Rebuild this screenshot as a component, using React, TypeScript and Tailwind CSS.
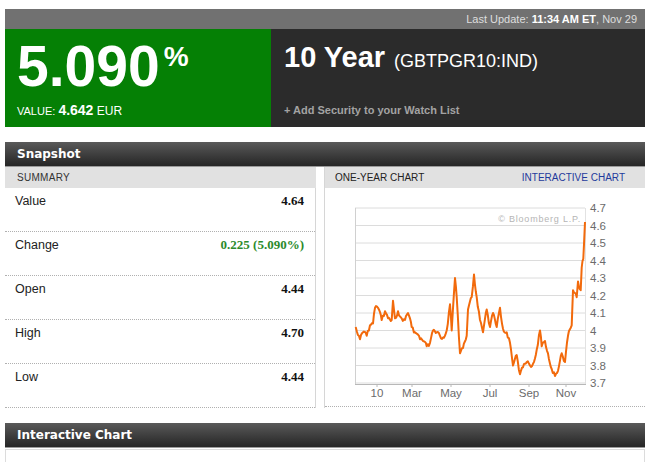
import React from "react";

const KEYS: [number, number][] = [
  [355.7, 4.02], [360, 3.95], [363, 3.99], [366.7, 3.97], [370, 4.03], [373, 4.04],
  [375, 4.13], [378, 4.13], [381.7, 4.06], [385, 4.11], [388, 4.07], [391.7, 4.06],
  [393, 4.17], [395, 4.07], [398, 4.11], [401.7, 4.07], [405, 4.06], [408, 4.1],
  [411.7, 4.02], [415, 3.99], [420, 3.95], [423, 3.94], [426.7, 3.91], [430, 3.93],
  [433, 4.0], [436.7, 3.99], [440, 3.97], [443, 3.96], [446.7, 4.0], [450, 4.15],
  [451.7, 4.0], [455, 4.3], [456.7, 4.19], [460, 3.87], [463, 3.9], [466.7, 3.97],
  [468, 4.12], [471.7, 4.19], [474, 4.32], [476.7, 4.19], [480, 4.06], [483, 3.99],
  [486.7, 4.12], [490, 4.02], [493, 4.1], [496.7, 4.02], [500, 4.13], [503, 4.01],
  [506.7, 3.99], [510, 3.93], [513, 3.8], [516.7, 3.86], [520, 3.75], [523, 3.79],
  [526.7, 3.82], [530, 3.8], [533, 3.81], [536.7, 3.89], [540, 4.0], [541.7, 3.91],
  [545, 3.94], [548, 3.87], [551.7, 3.78], [555, 3.74], [558, 3.77], [561.7, 3.87],
  [565, 3.82], [568, 3.97], [571.7, 4.03], [573, 4.23], [576.7, 4.19], [578, 4.28],
  [580.7, 4.23], [581.7, 4.36], [583.3, 4.41], [585, 4.62],
];

const yOf = (v: number) => 383 - (v - 3.7) * 175;

function buildPath() {
  const pts: string[] = [];
  for (let i = 0; i < KEYS.length - 1; i++) {
    const [x0, v0] = KEYS[i];
    const [x1, v1] = KEYS[i + 1];
    const steps = Math.max(1, Math.round(x1 - x0));
    for (let s = 0; s < steps; s++) {
      const t = s / steps;
      const x = x0 + (x1 - x0) * t;
      const noise = s === 0 ? 0 : Math.sin(x * 12.9898) * 0.012;
      const v = v0 + (v1 - v0) * t + noise;
      pts.push(`${x.toFixed(1)},${yOf(v).toFixed(1)}`);
    }
  }
  const last = KEYS[KEYS.length - 1];
  pts.push(`${last[0]},${yOf(last[1]).toFixed(1)}`);
  return pts.join(" ");
}

const LEVELS = [4.7, 4.6, 4.5, 4.4, 4.3, 4.2, 4.1, 4.0, 3.9, 3.8, 3.7];
const MONTHS: [string, number][] = [
  ["10", 377], ["Mar", 412], ["May", 451], ["Jul", 490], ["Sep", 529], ["Nov", 566],
];

function OneYearChart() {
  const line = buildPath();
  return (
    <svg width={320} height={218} viewBox="325 188 320 218" className="block">
      {LEVELS.map((v) => (
        <line key={v} x1={355} x2={585} y1={yOf(v)} y2={yOf(v)} stroke="#dcdcdc" strokeWidth={1} />
      ))}
      <line x1={355.5} x2={355.5} y1={yOf(4.7)} y2={384} stroke="#d0d0d0" />
      <line x1={585.5} x2={585.5} y1={yOf(4.7)} y2={384} stroke="#e2e2e2" />
      <line x1={355} x2={586} y1={384.5} y2={384.5} stroke="#b8b8b8" />
      {MONTHS.map(([m, x]) => (
        <g key={m}>
          <line x1={x} x2={x} y1={384} y2={387} stroke="#b8b8b8" />
          <text x={x} y={397} textAnchor="middle" fontSize={11.5} fill="#6b6b6b" fontFamily="'Liberation Sans', Arial, sans-serif">
            {m}
          </text>
        </g>
      ))}
      {LEVELS.map((v) => (
        <text key={v} x={590} y={yOf(v) + 4} fontSize={11.5} fill="#6b6b6b" fontFamily="'Liberation Sans', Arial, sans-serif">
          {v === 4 ? "4" : v.toFixed(1)}
        </text>
      ))}
      <text x={581} y={222} textAnchor="end" fontSize={9} letterSpacing={0.8} fill="#b5b5b5" fontFamily="'Liberation Sans', Arial, sans-serif">
        © Bloomberg L.P.
      </text>
      <polyline points={line} fill="none" stroke="#f26a0c" strokeWidth={2} strokeLinejoin="round" />
    </svg>
  );
}

const ROWS = [
  { label: "Value", value: "4.64", green: false },
  { label: "Change", value: "0.225 (5.090%)", green: true },
  { label: "Open", value: "4.44", green: false },
  { label: "High", value: "4.70", green: false },
  { label: "Low", value: "4.44", green: false },
];

function SectionHeader({ title }: { title: string }) {
  return (
    <div className="h-[25px] flex items-center pl-[12px] bg-gradient-to-b from-[#5a5a5a] to-[#262626] border-b border-[#9a9a9a]">
      <span className="text-white font-bold text-[12px] font-['DejaVu_Sans',Verdana,sans-serif]">{title}</span>
    </div>
  );
}

export default function App() {
  return (
    <div className="w-[654px] h-[462px] overflow-hidden bg-white pt-[9px] pl-[5px] pr-[9px] font-['Liberation_Sans',Arial,sans-serif]">
      {/* quote header */}
      <div className="h-[20px] bg-[#717171] flex items-center justify-end pr-[8px] text-[11px] text-[#dedede]">
        <span>
          Last Update: <b className="text-white">11:34 AM ET</b>, Nov 29
        </span>
      </div>
      <div className="flex h-[98px]">
        <div className="w-[266px] bg-[#058005] text-white pl-[12px] flex flex-col">
          <div className="flex items-start mt-[9px] h-[58px]">
            <span className="text-[57px] font-bold leading-[56px]">5.090</span>
            <span className="text-[28px] font-bold leading-[28px] ml-[4px] mt-[5px]">%</span>
          </div>
          <div className="mt-[7px] text-[11px] leading-[14px] flex items-baseline">
            <span>VALUE:&nbsp;</span>
            <span className="text-[14px] font-bold">4.642</span>
            <span className="text-[12px]">&nbsp;EUR</span>
          </div>
        </div>
        <div className="flex-1 bg-[#2b2b2b] pl-[13px] flex flex-col">
          <div className="mt-[11px] flex items-baseline text-white">
            <span className="text-[29px] font-bold leading-[34px]">10 Year</span>
            <span className="text-[18px] ml-[9px]">(GBTPGR10:IND)</span>
          </div>
          <div className="mt-[27px] text-[11px] font-bold text-[#a3a3a3]">+ Add Security to your Watch List</div>
        </div>
      </div>

      {/* snapshot */}
      <div className="mt-[15px]">
        <SectionHeader title="Snapshot" />
        <div className="flex gap-[8px]">
          <div className="w-[311px]">
            <div className="h-[21px] bg-[#e1e1e1] flex items-center pl-[12px] text-[10px] tracking-[0.3px] text-[#333]">
              SUMMARY
            </div>
            <div className="border-r border-[#d6d6d6]">
              {ROWS.map((r) => (
                <div
                  key={r.label}
                  className="h-[44px] border-b border-dotted border-[#b0b0b0] flex justify-between items-start pt-[5px] pl-[10px] pr-[11px]"
                >
                  <span className="text-[12.5px] text-[#222] leading-[16px]">{r.label}</span>
                  <span
                    className={`text-[13px] font-bold leading-[16px] font-['Liberation_Serif','Times_New_Roman',serif] ${
                      r.green ? "text-[#2b8a2b]" : "text-[#111]"
                    }`}
                  >
                    {r.value}
                  </span>
                </div>
              ))}
            </div>
          </div>
          <div className="flex-1 border-l border-[#d6d6d6]">
            <div className="h-[21px] bg-[#e1e1e1] flex items-center justify-between pl-[10px] pr-[20px] text-[10px]">
              <span className="text-[#222]">ONE-YEAR CHART</span>
              <span className="text-[#1f3a9c]">INTERACTIVE CHART</span>
            </div>
            <div className="border-b border-dotted border-[#b0b0b0]">
              <OneYearChart />
            </div>
          </div>
        </div>
      </div>

      {/* interactive chart */}
      <div className="mt-[15px]">
        <SectionHeader title="Interactive Chart" />
        <div className="mt-[1px] h-[40px] border border-[#dcdcdc]" />
      </div>
    </div>
  );
}
